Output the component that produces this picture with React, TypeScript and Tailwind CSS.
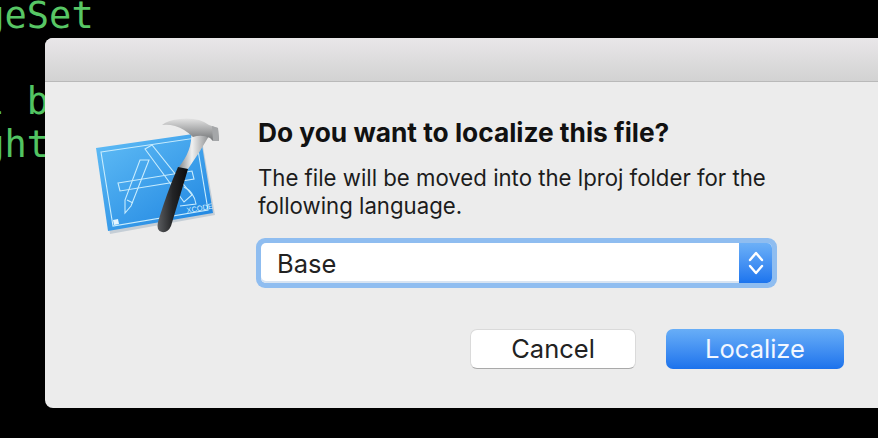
import React from 'react'

function XcodeIcon() {
  return (
    <svg width="160" height="150" viewBox="0 0 160 150" className="shrink-0">
      <defs>
        <linearGradient id="plan" x1="0" y1="0" x2="0.8" y2="1">
          <stop offset="0" stopColor="#62bef6" />
          <stop offset="1" stopColor="#2288e2" />
        </linearGradient>
        <linearGradient id="steel" x1="0" y1="0" x2="1" y2="0">
          <stop offset="0" stopColor="#7f8386" />
          <stop offset="0.45" stopColor="#f0f0f0" />
          <stop offset="1" stopColor="#8e9092" />
        </linearGradient>
        <linearGradient id="head" x1="0" y1="0" x2="0" y2="1">
          <stop offset="0" stopColor="#e2e2e2" />
          <stop offset="1" stopColor="#707274" />
        </linearGradient>
        <linearGradient id="grip" x1="0" y1="0" x2="1" y2="0">
          <stop offset="0" stopColor="#5b5d60" />
          <stop offset="0.5" stopColor="#232426" />
          <stop offset="1" stopColor="#0b0b0c" />
        </linearGradient>
      </defs>
      <path d="M16 48 L120 33 L134 113 L29 132 Z" fill="#7d99b0" opacity="0.35" transform="translate(1 2)" />
      <path d="M16 48 L120 33 L133 113 L28 131 Z" fill="url(#plan)" />
      <g fill="none" stroke="#c8ecfd" strokeWidth="1.1">
        <path d="M21 52 L116 38 L128 110 L33 126 Z" />
        <path d="M38 83 L112 71 L114 79 L40 91 Z" />
        <path d="M65 49 L72 45 L112 95 L104 102 Z" />
        <path d="M60 60 L69 60 L51 106 L45 113 L45 100 Z" />
        <path d="M47 100 L53 103" />
        <path d="M104 87 Q114 92 116 104 L100 106" />
      </g>
      <path d="M33 120 l5 -1 l1 5 l-5 1 Z" fill="#e6f6ff" />
      <text x="107" y="113" fontSize="7.5" fontFamily="Liberation Sans, sans-serif" fill="#d5f0ff" transform="rotate(-10 107 113)">XCODE</text>
      <path d="M111 32 Q113 50 98 68 L108 69 Q120 52 129 36 Z" fill="url(#steel)" />
      <path d="M98 67 L108 69 L91 126 Q88 133 82 132 Q76 131 78 122 Q87 92 98 67 Z" fill="url(#grip)" />
      <path d="M82 25 Q88 20 100 19 Q118 17 129 25 L138 28 L139 41 L133 41 L130 38 Q122 34 113 37 Q105 29 95 26 Q88 24 82 25 Z" fill="url(#head)" />
      <path d="M132 26 L138 28 L139 41 L133 41 Z" fill="#a5a7a9" />
    </svg>
  )
}

export default function App() {
  return (
    <div className="relative h-[438px] w-[878px] overflow-hidden bg-black">
      <div className="-ml-[40px] whitespace-pre font-['DejaVu_Sans_Mono',monospace] text-[37px] leading-[43px] text-[#52c462]">
        <div className="-mt-[6px] text-[#58c765]">ngeSet</div>
        <div>&nbsp;</div>
        <div>ll b</div>
        <div>ight</div>
      </div>

      <div className="absolute left-[45px] top-[38px] flex h-[370px] w-[860px] flex-col overflow-hidden rounded-l-lg bg-[#ececec] font-['Inter',sans-serif]">
        <div className="h-[44px] shrink-0 border-b border-[#b9b9b9] bg-gradient-to-b from-[#e9e7e9] to-[#d2d2d2]"></div>
        <div className="flex pl-[35px] pt-[18px]">
          <XcodeIcon />
          <div className="ml-[18px] flex w-[586px] flex-col">
            <h1 className="mt-[17px] whitespace-nowrap text-[26.3px] font-bold leading-[32px] text-[#111]">Do you want to localize this file?</h1>
            <p className="mt-[15px] w-[530px] text-[22.2px] leading-[28px] text-[#1c1c1c]">The file will be moved into the lproj folder for the following language.</p>

            <div className="-ml-[2px] mt-[18px] w-[521px] rounded-[9px] bg-[#8fbdf0] p-[5px]">
              <div className="flex h-[40px] items-stretch overflow-hidden rounded-[5px] bg-white shadow-[inset_0_-2px_0_#d8e4f2]">
                <span className="flex-1 pl-[16px] pt-[1px] text-[25.5px] leading-[40px] text-[#222]">Base</span>
                <span className="flex w-[33px] items-center justify-center bg-gradient-to-b from-[#6cb0f7] to-[#1b74ee]">
                  <svg width="18" height="28" viewBox="0 0 18 28" fill="none" stroke="#fff" strokeWidth="2.4" strokeLinecap="round" strokeLinejoin="round">
                    <path d="M3 11 L9 4 L15 11" />
                    <path d="M3 17 L9 24 L15 17" />
                  </svg>
                </span>
              </div>
            </div>

            <div className="mt-[41px] flex justify-end gap-[30px]">
              <button className="h-[40px] w-[166px] rounded-[7px] border border-[#dadada] border-b-[#a9a9a9] bg-white text-[25.5px] leading-none text-[#222]">Cancel</button>
              <button className="h-[40px] w-[178px] rounded-[7px] bg-gradient-to-b from-[#68aef7] to-[#1b72ec] text-[25.5px] leading-none text-[#f2f7ff]">Localize</button>
            </div>
          </div>
        </div>
      </div>
    </div>
  )
}
